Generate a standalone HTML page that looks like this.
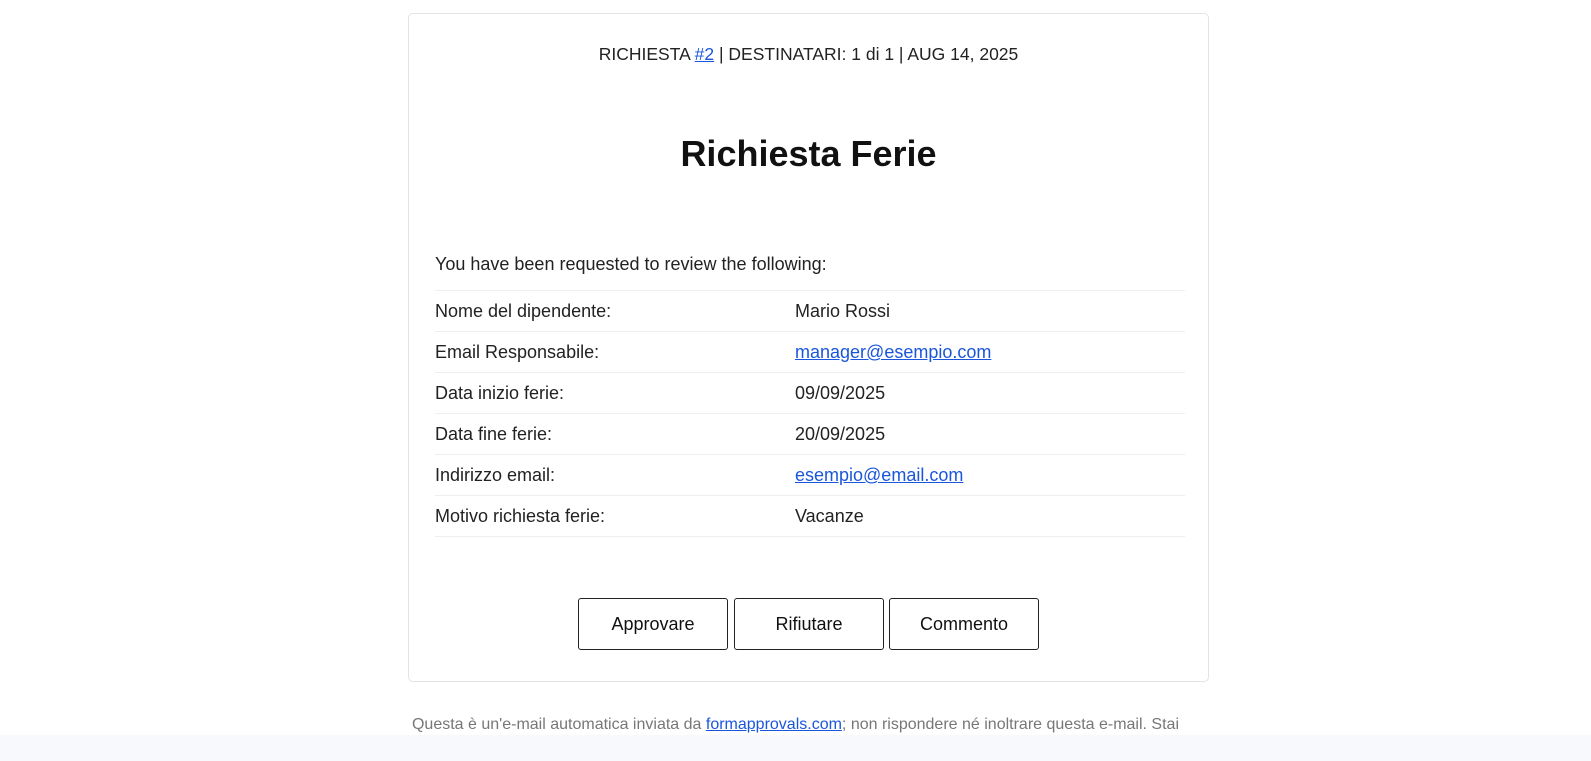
<!DOCTYPE html>
<html><head><meta charset="utf-8"><style>
body{margin:0;background:#fff;font-family:"Liberation Sans",sans-serif;color:#222;width:1591px;height:761px;overflow:hidden;position:relative}
.card{position:absolute;left:408px;top:13px;width:801px;height:669px;border:1px solid #e3e3e3;border-radius:5px;box-sizing:border-box}
.meta{position:absolute;top:30px;left:0;width:100%;text-align:center;font-size:17.5px;color:#222}
a{color:#1a56db;text-decoration:underline}
h1{position:absolute;top:119px;left:0;width:100%;text-align:center;margin:0;font-size:36px;font-weight:bold;color:#111}
.intro{position:absolute;left:26px;top:240px;font-size:18px}
.tbl{position:absolute;left:26px;top:276px;width:750px}
.row{height:40px;border-top:1px solid #eee;position:relative;font-size:18px}
.row:last-child{border-bottom:1px solid #eee}
.row span{position:absolute;top:10px}
.row .l{left:0}.row .r{left:360px}
.btn{position:absolute;top:584px;width:150px;height:52px;border:1px solid #222;border-radius:3px;box-sizing:border-box;text-align:center;line-height:50px;font-size:18px;color:#111}
.foot{position:absolute;top:716px;left:0;width:100%;text-align:center;font-size:16px;color:#777}
.strip{position:absolute;top:735px;left:0;width:100%;height:26px;background:#f8f9fc}
</style></head><body>
<div class="card">
<div class="meta">RICHIESTA <a>#2</a> | DESTINATARI: 1 di 1 | AUG 14, 2025</div>
<h1>Richiesta Ferie</h1>
<div class="intro">You have been requested to review the following:</div>
<div class="tbl">
<div class="row"><span class="l">Nome del dipendente:</span><span class="r">Mario Rossi</span></div>
<div class="row"><span class="l">Email Responsabile:</span><span class="r"><a>manager@esempio.com</a></span></div>
<div class="row"><span class="l">Data inizio ferie:</span><span class="r">09/09/2025</span></div>
<div class="row"><span class="l">Data fine ferie:</span><span class="r">20/09/2025</span></div>
<div class="row"><span class="l">Indirizzo email:</span><span class="r"><a>esempio@email.com</a></span></div>
<div class="row"><span class="l">Motivo richiesta ferie:</span><span class="r">Vacanze</span></div>
</div>
<div class="btn" style="left:169px">Approvare</div>
<div class="btn" style="left:325px">Rifiutare</div>
<div class="btn" style="left:480px">Commento</div>
</div>
<div class="foot">Questa è un'e-mail automatica inviata da <a>formapprovals.com</a>; non rispondere né inoltrare questa e-mail. Stai</div>
<div class="strip"></div>
</body></html>
